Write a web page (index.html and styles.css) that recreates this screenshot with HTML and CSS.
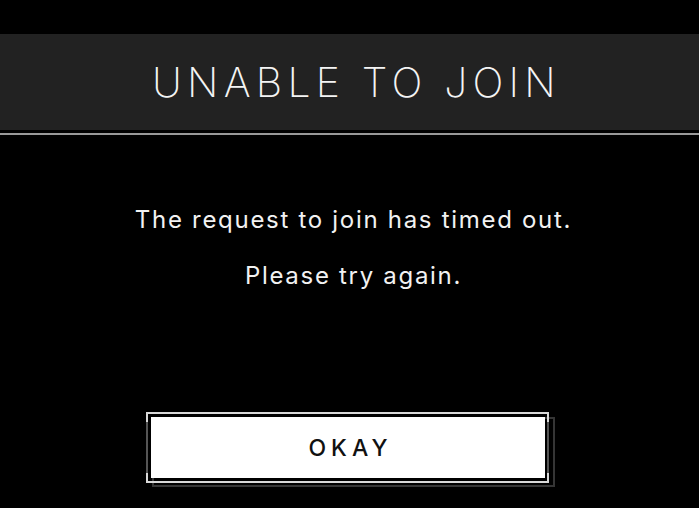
FILE: index.html
```html
<!DOCTYPE html>
<html lang="en">
<head>
    <meta charset="UTF-8">
    <meta name="viewport" content="width=device-width, initial-scale=1.0">
    <title>Unable to Join</title>
    <link rel="stylesheet" href="styles.css">
</head>
<body>
    <div class="dialog">
        <!-- 标题栏 -->
        <div class="dialog-header">
            <h1>UNABLE TO JOIN</h1>
        </div>
        <div class="dialog-rule"></div>

        <!-- 提示信息 -->
        <div class="dialog-body">
            <p>The request to join has timed out.</p>
            <p>Please try again.</p>
        </div>

        <!-- 确认按钮 -->
        <div class="dialog-actions">
            <div class="okay-frame">
                <span class="okay-shadow"></span>
                <button type="button" class="okay-button">OKAY</button>
            </div>
        </div>
    </div>
</body>
</html>
```

FILE: styles.css
```css
/* 整体布局 */
html, body {
    margin: 0;
    padding: 0;
    height: 100%;
    background-color: #000;
    overflow: hidden;
}

body {
    font-family: Inter, "Noto Sans", sans-serif;
    color: #f2f2f2;
}

.dialog {
    padding-top: 34px;
}

/* 标题栏 */
.dialog-header {
    height: 96px;
    background-color: #222;
    display: flex;
    align-items: center;
    justify-content: center;
}

.dialog-header h1 {
    margin: 0 -5px 0 0; /* 抵消最后一个字母的间距 */
    padding-left: 9px;
    font-size: 41px;
    font-weight: 200;
    letter-spacing: 5.2px;
    color: #f4f4f4;
}

.dialog-rule {
    margin-top: 3px;
    height: 2px;
    background-color: #9a9a9a;
}

/* 提示信息 */
.dialog-body {
    padding: 72px 0 0 8px;
    text-align: center;
}

.dialog-body p {
    margin: 0 0 30px;
    font-size: 24px;
    line-height: 26px;
    letter-spacing: 1.7px;
}

/* 按钮区域 */
.dialog-actions {
    display: flex;
    justify-content: center;
    padding-top: 98px;
    padding-right: 3px;
}

.okay-frame {
    position: relative;
}

/* 错位的暗色框 */
.okay-shadow {
    position: absolute;
    top: 0;
    left: 1px;
    right: -10px;
    bottom: -9px;
    border: 2px solid #353535;
}

.okay-button {
    position: relative;
    display: block;
    width: 394px;
    height: 61px;
    border: none;
    background-color: #fff;
    color: #111;
    font-family: Inter, "Noto Sans", sans-serif;
    font-size: 23px;
    font-weight: 500;
    letter-spacing: 5px;
    padding: 0 0 0 5px;
    cursor: pointer;
}

/* 外框：上下浅灰，左右中段偏暗 */
.okay-button::before {
    content: "";
    position: absolute;
    top: -5px;
    left: -5px;
    right: -4px;
    bottom: -5px;
    border: 2px solid #d4d4d4;
    border-image: linear-gradient(to bottom, #d8d8d8 0 14%, #555 14% 86%, #d8d8d8 86%) 2;
    pointer-events: none;
}
```
